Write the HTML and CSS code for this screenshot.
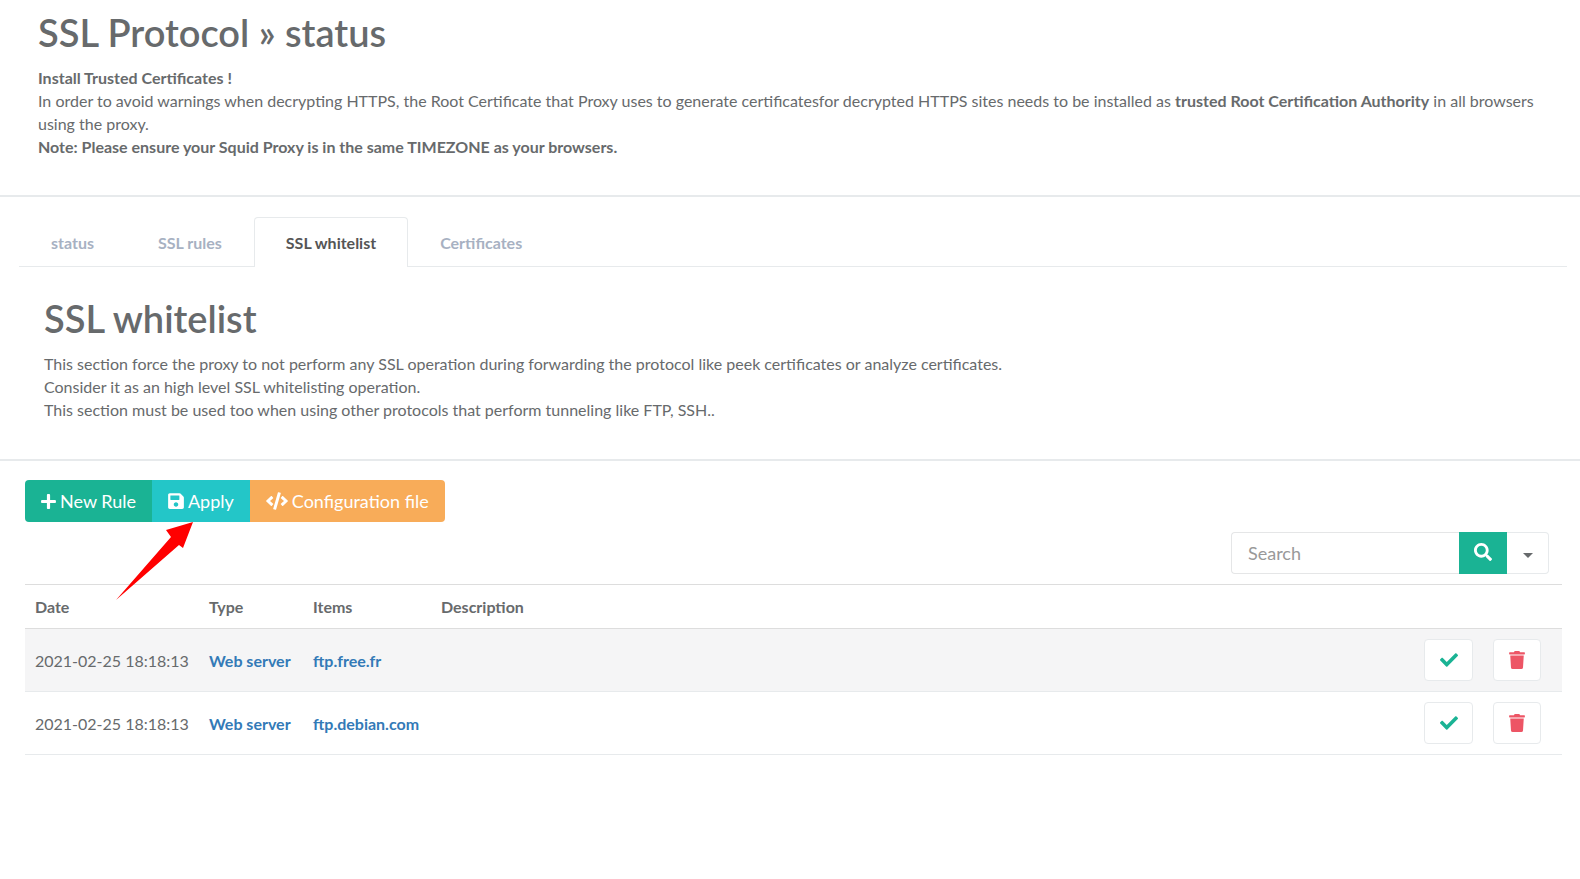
FILE: index.html
```html
<!DOCTYPE html>
<html lang="en">
<head>
<meta charset="utf-8">
<title>SSL Protocol status</title>
<link rel="stylesheet" href="styles.css">
</head>
<body>
<svg width="0" height="0" class="defs">
  <symbol id="i-plus" viewBox="0 0 448 512"><path d="M416 208H272V64c0-17.67-14.33-32-32-32h-32c-17.67 0-32 14.33-32 32v144H32c-17.67 0-32 14.33-32 32v32c0 17.67 14.33 32 32 32h144v144c0 17.67 14.33 32 32 32h32c17.67 0 32-14.33 32-32V304h144c17.67 0 32-14.33 32-32v-32c0-17.67-14.33-32-32-32z"/></symbol>
  <symbol id="i-save" viewBox="0 0 448 512"><path d="M433.941 129.941l-83.882-83.882A48 48 0 0 0 316.118 32H48C21.49 32 0 53.49 0 80v352c0 26.51 21.49 48 48 48h352c26.51 0 48-21.49 48-48V163.882a48 48 0 0 0-14.059-33.941zM224 416c-35.346 0-64-28.654-64-64 0-35.346 28.654-64 64-64s64 28.654 64 64c0 35.346-28.654 64-64 64zm96-304.52V212c0 6.627-5.373 12-12 12H76c-6.627 0-12-5.373-12-12V108c0-6.627 5.373-12 12-12h228.52c3.183 0 6.235 1.264 8.485 3.515l3.48 3.48A11.996 11.996 0 0 1 320 111.48z"/></symbol>
  <symbol id="i-code" viewBox="0 0 640 512"><path d="M278.9 511.5l-61-17.7c-6.4-1.8-10-8.5-8.2-14.9L346.2 8.7c1.8-6.4 8.5-10 14.9-8.2l61 17.7c6.4 1.8 10 8.5 8.2 14.9L293.8 503.3c-1.9 6.4-8.5 10.1-14.9 8.2zm-114-112.2l43.5-46.4c4.6-4.9 4.3-12.7-.8-17.2L117 256l90.6-79.7c5.1-4.5 5.5-12.3.8-17.2l-43.5-46.4c-4.5-4.8-12.1-5.1-17-.5L3.8 247.2c-5.1 4.7-5.1 12.8 0 17.5l144.1 135.1c4.9 4.6 12.5 4.4 17-.5zm327.2.6l144.1-135.1c5.1-4.7 5.1-12.8 0-17.5L492.1 112.1c-4.8-4.5-12.4-4.3-17 .5L431.6 159c-4.6 4.9-4.3 12.7.8 17.2L523 256l-90.6 79.7c-5.1 4.5-5.5 12.3-.8 17.2l43.5 46.4c4.5 4.9 12.1 5.1 17 .6z"/></symbol>
  <symbol id="i-search" viewBox="0 0 512 512"><path d="M505 442.7L405.3 343c-4.5-4.5-10.6-7-17-7H372c27.6-35.3 44-79.7 44-128C416 93.1 322.9 0 208 0S0 93.1 0 208s93.1 208 208 208c48.3 0 92.7-16.4 128-44v16.3c0 6.4 2.5 12.5 7 17l99.7 99.7c9.4 9.4 24.6 9.4 33.9 0l28.3-28.3c9.4-9.4 9.4-24.6.1-34zM208 336c-70.7 0-128-57.2-128-128 0-70.7 57.2-128 128-128 70.7 0 128 57.2 128 128 0 70.7-57.2 128-128 128z"/></symbol>
  <symbol id="i-check" viewBox="0 0 512 512"><path d="M173.898 439.404l-166.4-166.4c-9.997-9.997-9.997-26.206 0-36.204l36.203-36.204c9.997-9.998 26.207-9.998 36.204 0L192 312.69 432.095 72.596c9.997-9.997 26.207-9.997 36.204 0l36.203 36.204c9.997 9.997 9.997 26.206 0 36.204l-294.4 294.401c-9.998 9.997-26.207 9.997-36.204-.001z"/></symbol>
  <symbol id="i-trash" viewBox="0 0 448 512"><path d="M432 32H312l-9.4-18.7A24 24 0 0 0 281.1 0H166.8a23.72 23.72 0 0 0-21.4 13.3L136 32H16A16 16 0 0 0 0 48v32a16 16 0 0 0 16 16h416a16 16 0 0 0 16-16V48a16 16 0 0 0-16-16zM53.2 467a48 48 0 0 0 47.9 45h245.8a48 48 0 0 0 47.9-45L416 128H32z"/></symbol>
</svg>

<header class="page-head">
  <h1>SSL Protocol » status</h1>
  <p><strong>Install Trusted Certificates !</strong><br>
  In order to avoid warnings when decrypting HTTPS, the Root Certificate that Proxy uses to generate certificatesfor decrypted HTTPS sites needs to be installed as <strong>trusted Root Certification Authority</strong> in all browsers using the proxy.<br>
  <strong>Note: Please ensure your Squid Proxy is in the same TIMEZONE as your browsers.</strong></p>
</header>

<nav class="tabs">
  <a class="tab">status</a>
  <a class="tab">SSL rules</a>
  <a class="tab active">SSL whitelist</a>
  <a class="tab">Certificates</a>
</nav>

<section class="section-head">
  <h2>SSL whitelist</h2>
  <p>This section force the proxy to not perform any SSL operation during forwarding the protocol like peek certificates or analyze certificates.<br>
  Consider it as an high level SSL whitelisting operation.<br>
  This section must be used too when using other protocols that perform tunneling like FTP, SSH..</p>
</section>

<main class="content">
  <div class="btn-group">
    <button class="btn btn-green"><svg class="ic ic-plus"><use href="#i-plus"/></svg>New Rule</button>
    <button class="btn btn-cyan"><svg class="ic ic-save"><use href="#i-save"/></svg>Apply</button>
    <button class="btn btn-orange"><svg class="ic ic-code"><use href="#i-code"/></svg>Configuration file</button>
  </div>

  <div class="search-row">
    <div class="search">
      <span class="search-input">Search</span>
      <button class="search-btn"><svg class="ic ic-search"><use href="#i-search"/></svg></button>
      <button class="search-caret"><span class="caret"></span></button>
    </div>
  </div>

  <table class="rules">
    <thead>
      <tr><th class="c-date">Date</th><th class="c-type">Type</th><th class="c-items">Items</th><th>Description</th><th class="c-act"></th><th class="c-del"></th></tr>
    </thead>
    <tbody>
      <tr class="odd">
        <td>2021-02-25 18:18:13</td><td><a>Web server</a></td><td><a>ftp.free.fr</a></td><td></td>
        <td class="c-act"><button class="icon-btn"><svg class="ic ic-check"><use href="#i-check"/></svg></button></td>
        <td class="c-del"><button class="icon-btn"><svg class="ic ic-trash"><use href="#i-trash"/></svg></button></td>
      </tr>
      <tr>
        <td>2021-02-25 18:18:13</td><td><a>Web server</a></td><td><a>ftp.debian.com</a></td><td></td>
        <td class="c-act"><button class="icon-btn"><svg class="ic ic-check"><use href="#i-check"/></svg></button></td>
        <td class="c-del"><button class="icon-btn"><svg class="ic ic-trash"><use href="#i-trash"/></svg></button></td>
      </tr>
    </tbody>
  </table>
</main>

<svg class="arrow" width="100" height="90" viewBox="110 515 100 90"><polygon points="193,522 166,530 171,537 116,600 179,545 183,548" fill="#ff0000"/></svg>
</body>
</html>
```

FILE: styles.css
```css
* { box-sizing: border-box; }
html, body { margin: 0; padding: 0; }
body {
  position: relative;
  height: 879px;
  overflow: hidden;
  background: #fff;
  color: #676a6c;
  font-family: "Lato", "Open Sans", sans-serif;
  font-size: 16px;
  line-height: 23px;
}
.defs { position: absolute; }
h1, h2 { margin: 0; font-weight: 600; color: #676a6c; }
p { margin: 0; }
strong { font-weight: 700; }

.page-head {
  height: 197px;
  padding: 11px 30px 0 38px;
  border-bottom: 2px solid #e7eaec;
}
h1 { font-size: 38px; line-height: 42px; margin-bottom: 13px; }

.tabs {
  display: flex;
  margin: 20px 13px 0 19px;
  height: 50px;
  border-bottom: 1px solid #e7eaec;
}
.tab {
  display: block;
  padding: 0 31px;
  line-height: 49px;
  font-weight: 700;
  color: #a7b1c2;
  border: 1px solid transparent;
  border-bottom: 0;
  border-radius: 4px 4px 0 0;
  height: 50px;
}
.tab.active {
  color: #555;
  background: #fff;
  border-color: #e7eaec;
}

.section-head {
  height: 194px;
  padding: 30px 30px 0 44px;
  border-bottom: 2px solid #e7eaec;
}
h2 { font-size: 38px; line-height: 42px; margin-bottom: 13px; }

.content { padding: 19px 18px 0 25px; }

.btn-group { display: flex; }
.btn {
  display: flex;
  align-items: center;
  height: 42px;
  padding: 0 16px;
  border: 0;
  color: #fff;
  font: inherit;
  font-size: 18px;
}
.btn-green { background: #1ab394; border-radius: 4px 0 0 4px; }
.btn-cyan { background: #23c6c8; }
.btn-orange { background: #f8ac59; border-radius: 0 4px 4px 0; }
.ic { fill: currentColor; display: block; }
.ic-plus { width: 15px; height: 17px; margin-right: 4px; }
.ic-save { width: 16px; height: 18px; margin-right: 4px; }
.ic-code { width: 22px; height: 18px; margin-right: 4px; }

.search-row { display: flex; justify-content: flex-end; margin-top: 10px; padding-right: 13px; }
.search { display: flex; height: 42px; width: 318px; }
.search-input {
  flex: 1;
  padding-left: 16px;
  font-size: 18px;
  line-height: 40px;
  color: #999;
  border: 1px solid #e5e6e7;
  border-right: 0;
  border-radius: 4px 0 0 4px;
}
.search-btn {
  width: 48px;
  border: 0;
  padding: 0;
  background: #1ab394;
  color: #fff;
  display: flex;
  align-items: center;
  justify-content: center;
}
.ic-search { width: 18px; height: 18px; margin-top: -3px; }
.search-caret {
  width: 42px;
  padding: 0;
  background: #fff;
  border: 1px solid #e7eaec;
  border-left: 0;
  border-radius: 0 4px 4px 0;
  display: flex;
  align-items: center;
  justify-content: center;
}
.caret {
  width: 0;
  height: 0;
  margin-top: 4px;
  border-top: 5px solid #676a6c;
  border-left: 5px solid transparent;
  border-right: 5px solid transparent;
}

.rules {
  width: 1537px;
  margin-top: 10px;
  border-collapse: collapse;
  table-layout: fixed;
  font-size: 16px;
}
.rules th {
  height: 44px;
  padding: 0 10px;
  text-align: left;
  font-weight: 700;
  border-top: 1px solid #ddd;
  border-bottom: 1px solid #ddd;
}
.rules td {
  height: 63px;
  padding: 0 10px;
  border-bottom: 1px solid #e7eaec;
  white-space: nowrap;
}
.rules .odd td { background: #f5f5f6; }
.rules a { font-weight: 700; color: #337ab7; }
.c-date { width: 174px; }
.c-type { width: 104px; }
.c-items { width: 128px; }
.c-act { width: 69px; padding: 0 !important; }
.c-del { width: 69px; padding: 0 !important; }
.icon-btn {
  display: flex;
  align-items: center;
  justify-content: center;
  height: 42px;
  padding: 0;
  background: #fff;
  border: 1px solid #e7eaec;
  border-radius: 4px;
}
.c-act .icon-btn { width: 49px; }
.c-del .icon-btn { width: 48px; }
.ic-check { width: 18px; height: 18px; color: #1ab394; }
.ic-trash { width: 16px; height: 18px; color: #ed5565; }

.arrow { position: absolute; left: 110px; top: 515px; }
```
